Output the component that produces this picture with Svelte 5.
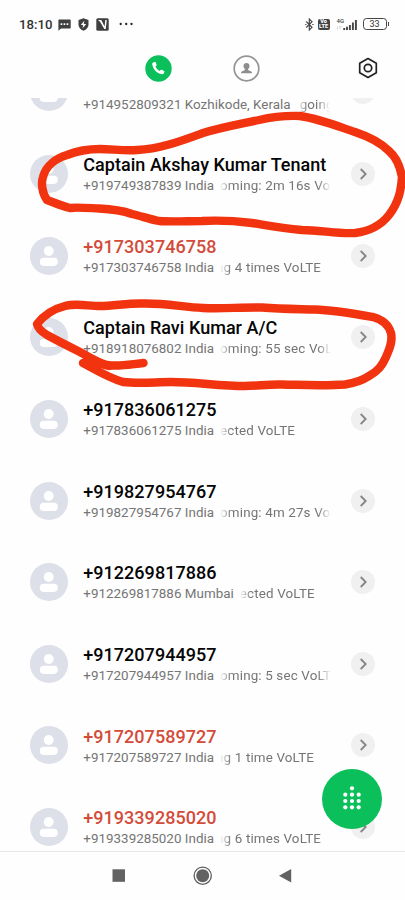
<script>
  const calls = [
    { title: '', number: '+914952809321', place: 'Kozhikode, Kerala', status: 'going', shift: 3, width: 33 },
    { title: 'Captain Akshay Kumar Tenant', number: '+919749387839', place: 'India', status: 'oming: 2m 16s Vo' },
    { title: '+917303746758', number: '+917303746758', place: 'India', status: 'ng 4 times VoLTE', shift: -4, missed: true },
    { title: 'Captain Ravi Kumar A/C', number: '+918918076802', place: 'India', status: 'oming: 55 sec VoL' },
    { title: '+917836061275', number: '+917836061275', place: 'India', status: 'ected VoLTE' },
    { title: '+919827954767', number: '+919827954767', place: 'India', status: 'oming: 4m 27s Vo' },
    { title: '+912269817886', number: '+912269817886', place: 'Mumbai', status: 'ected VoLTE', width: 90 },
    { title: '+917207944957', number: '+917207944957', place: 'India', status: 'oming: 5 sec VoLT' },
    { title: '+917207589727', number: '+917207589727', place: 'India', status: 'ng 1 time VoLTE', shift: -4, missed: true },
    { title: '+919339285020', number: '+919339285020', place: 'India', status: 'ng 6 times VoLTE', shift: -4, missed: true }
  ];
  const dots = [[0, -10.7], [-6.7, -4.3], [0, -4.3], [6.7, -4.3], [-6.7, 2], [0, 2], [6.7, 2], [-6.7, 8.3], [0, 8.3], [6.7, 8.3]];
</script>

<div class="phone">
  <div class="status-bar">
    <span class="time">18:10</span>
    <svg class="chat" width="13" height="12" viewBox="0 0 13 12">
      <path d="M1 .5h11q.7 0 .7.7v7.6q0 .7-.7.7H3L.4 11.7V1.2Q.4.5 1 .5z" fill="#3f3f3f" />
      <path d="M2.6 4.2h1.7v1.7H2.6zM5.6 4.2h1.7v1.7H5.6zM8.6 4.2h1.7v1.7H8.6z" fill="#fff" />
    </svg>
    <svg class="shield" width="11" height="13" viewBox="0 0 11 13">
      <path d="M5.5.3 10.5 2v4.5c0 3-2 5-5 6.2C2.5 11.5.5 9.5.5 6.5V2z" fill="#3f3f3f" />
      <path d="M6.3 2.8 2.8 7h2.300l-.5 3.200L8.200 5.900H5.800z" fill="#fff" />
    </svg>
    <svg class="app" width="13" height="13" viewBox="0 0 13 13">
      <rect x=".3" y=".3" width="12.4" height="12.4" rx="1.5" fill="#3f3f3f" />
      <path d="M2 2h3.300l3.300 6.400L9.300 2h1.500L9.700 11H8.300L4 3.800z" fill="#fff" />
    </svg>
    <svg class="more" width="15" height="4" viewBox="0 0 15 4" fill="#222">
      <circle cx="1.7" cy="2" r="1.15" /><circle cx="7.2" cy="2" r="1.15" /><circle cx="12.5" cy="2" r="1.15" />
    </svg>
    <span class="grow"></span>
    <svg class="bt" width="9" height="13" viewBox="0 0 9 13" fill="none" stroke="#444" stroke-width="1.15">
      <path d="M1.2 3.5 7 9.300 4.300 12V1L7 3.700 1.200 9.500" />
      <path d="M.2 6.500h1.300M7.300 6.500h1.300" />
    </svg>
    <div class="volte"><span>Vo</span><span>LTE</span></div>
    <div class="signal">
      <span class="net">4G</span>
      <svg width="21" height="13" viewBox="0 0 21 13">
        <path d="M.5 8.500v3M3 8.500v3M2.200 8.500h2.200" stroke="#bbb" stroke-width=".6" />
        <path d="M7.200 10v2M10 8.700V12M12.900 7V12M15.900 4.500V12M18.900 2V12" stroke="#444" stroke-width="1.9" />
      </svg>
    </div>
    <div class="battery"><span>33</span></div>
  </div>

  <div class="tabs">
    <svg class="calls-tab" width="27" height="27" viewBox="0 0 27 27">
      <circle cx="13.5" cy="13.5" r="13.2" fill="#0bbf5b" />
      <path d="M8.100 7.500 9.700 6.900q.7-.2 1 .5l.9 2.300q.3.700-.3 1.100l-.9.700q1.200 2.900 4.200 4.400l1-.9q.5-.5 1.100-.2l2.300 1.200q.7.300.4 1l-.7 1.500q-.5.900-1.700.8C11.400 18.300 8 14.300 7.200 9.300q-.2-1.300.9-1.800z" fill="#fff" />
    </svg>
    <svg class="contacts-tab" width="27" height="27" viewBox="0 0 27 27">
      <circle cx="13.5" cy="13.5" r="12.3" fill="#fff" stroke="#959595" stroke-width="1.7" />
      <path d="M13.500 8c1.900 0 3 1.200 3 2.900 0 1.400-.6 2.500-1.400 3.200v1c1 .7 3.300.9 3.800 2.200v.9H8.100v-.9c.5-1.300 2.800-1.500 3.800-2.200v-1c-.8-.7-1.400-1.800-1.400-3.200C10.500 9.200 11.600 8 13.500 8z" fill="#8e8e8e" />
    </svg>
    <svg class="settings" width="20" height="22" viewBox="0 0 20 22" fill="none" stroke="#222" stroke-width="1.7" stroke-linejoin="round">
      <path d="M10 1.500 18.300 6.200v9.600L10 20.500 1.700 15.800V6.200z" />
      <circle cx="10" cy="11" r="3.7" />
    </svg>
  </div>

  <div class="list">
    {#each calls as call}
      <div class="row">
        <svg class="avatar" width="38" height="38" viewBox="0 0 38 38">
          <circle cx="19" cy="19" r="19" fill="#dde0e8" />
          <circle cx="18.7" cy="14" r="4.9" fill="#fff" />
          <rect x="9.8" y="20.7" width="18" height="8.2" rx="3.8" fill="#fff" />
        </svg>
        <div class="info">
          <div class="title" class:missed={call.missed}>{call.title}</div>
          <div class="sub">
            <span class="origin">{call.number} {call.place}</span>
            <span class="status" style:text-indent="{call.shift ?? 0}px" style:width="{call.width ?? 111}px">{call.status}</span>
          </div>
        </div>
        <svg class="open" width="24" height="24" viewBox="0 0 24 24">
          <circle cx="12" cy="12" r="12" fill="#f0f0f0" />
          <path d="m9.700 7 5 5-5 5" fill="none" stroke="#858585" stroke-width="1.8" />
        </svg>
      </div>
    {/each}
  </div>

  <div class="nav">
    <svg width="200" height="22" viewBox="0 0 200 22">
      <rect x="9.5" y="4.3" width="12.5" height="12.5" fill="#626262" />
      <circle cx="99.7" cy="10.7" r="8.6" fill="none" stroke="#5c5c5c" stroke-width="1.3" />
      <circle cx="99.7" cy="10.7" r="6.5" fill="#626262" />
      <path d="M176 10.700 188.200 4v13.400z" fill="#626262" />
    </svg>
  </div>

  <svg class="marker" width="405" height="900" viewBox="0 0 405 900" fill="none" stroke="#f2330f" stroke-width="8.4" stroke-linecap="round" stroke-linejoin="round">
    <path d="M70 208C61 206 53 202 47 200C42 193 41 183 43 177C46 165 57 158 67 155C77 151 89 149 100 149C112 149 124 151 137 150C160 149 181 141 203 133C223 127 241 124 259 120C276 116 286 115.500 300 116C320 119 337 126 355 132C370 137 381 143 389 151C396 157 400 166 402 177C401 190 399 202 389 215C382 224 371 231 355 233C338 234 320 230 302 230C279 228 265 225 252 223C236 221 219 220 202 221C188 221 172 222 159 221C149 219 141 216 132 214C121 210 110 209 99 208.500C88 208 76 207 70 208" />
    <path d="M83 363C96 370 109 378 123 382C140 384 155 382 171 382C195 382 220 386 245 386C257 386 269 384 282 384.500C305 385 324 386 345 384.500C355 383 363 380 369 376C378 371 382 366 386 357C389 350 393 342 391 333C389 326 384 320 373 317C350 313 333 310 315 309.500C297 309 280 309 262 307.500C241 307 223 309 203 308C183 307 164 303 143 303.500C128 303 114 306 100 306C88 306 76 303 65 306C53 309 44 315 37 324C38 329 42 332 47 335C58 341 68 346 78 351C88 356 96 362 107 365C119 367 132 364 143.500 363" />
    <path d="M84 363C92 360 99 364 109 366" />
  </svg>

  <svg class="dial" width="60" height="60" viewBox="-30 -30 60 60">
    <circle r="30" fill="#0bbf5b" />
    {#each dots as [x, y]}
      <circle cx={x} cy={y} r="2.1" fill="#fff" />
    {/each}
  </svg>
</div>

<style>
  :global(body) { background: #fff; }
  .phone {
    position: relative;
    width: 405px;
    height: 900px;
    overflow: hidden;
    display: flex;
    flex-direction: column;
    background: #fefefe;
    font-family: Roboto, "Noto Sans", sans-serif;
  }
  svg { display: block; flex: none; }
  .status-bar {
    height: 48px;
    flex: none;
    box-sizing: border-box;
    padding: 0 17px 0 19px;
    display: flex;
    align-items: center;
  }
  .time { width: 39px; font-size: 13.2px; font-weight: 500; color: #333; }
  .chat { margin-top: 2px; }
  .shield { margin-left: 7px; }
  .app { margin-left: 7px; margin-right: 10px; }
  .grow { flex: 1; }
  .volte {
    width: 12px;
    height: 11px;
    margin: 0 7px 0 4px;
    background: #444;
    border-radius: 2px;
    color: #fff;
    font-size: 5.5px;
    line-height: 5px;
    font-weight: 900;
    display: flex;
    flex-direction: column;
    align-items: center;
    justify-content: center;
  }
  .signal { position: relative; width: 21px; margin-right: 5px; }
  .net { position: absolute; left: 0; top: -1px; font-size: 6px; line-height: 7px; font-weight: 500; color: #444; }
  .battery {
    position: relative;
    width: 24px;
    height: 12px;
    margin-right: 1.5px;
    box-sizing: border-box;
    border: 1.3px solid #444;
    border-radius: 3.5px;
    font-size: 9px;
    line-height: 10px;
    color: #333;
    text-align: center;
  }
  .battery::after { content: ""; position: absolute; right: -3px; top: 3px; width: 1px; height: 4px; background: #444; }
  .tabs {
    height: 50px;
    flex: none;
    box-sizing: border-box;
    padding: 0 27px 10px 145px;
    display: flex;
    align-items: center;
  }
  .contacts-tab { margin-left: 61px; }
  .settings { margin-left: auto; }
  .list { height: 753px; flex: none; overflow: hidden; }
  .row {
    height: 81.65px;
    box-sizing: border-box;
    padding: 0 30px;
    display: flex;
    align-items: center;
  }
  .row:first-child { margin-top: -46.5px; }
  .info { flex: 1; min-width: 0; margin-left: 15.3px; padding-top: 1.4px; }
  .title { height: 22px; line-height: 22px; font-size: 18px; font-weight: 500; letter-spacing: .03px; color: #050505; white-space: nowrap; }
  .title.missed { color: #d34b39; }
  .sub { display: flex; height: 19px; line-height: 19px; font-size: 13.4px; color: #757575; white-space: nowrap; }
  .origin { letter-spacing: .02px; }
  .row:first-child .sub { padding-top: .3px; }
  .status {
    margin-left: 6px;
    overflow: hidden;
    letter-spacing: .15px;
    mask-image: linear-gradient(to right, transparent, #000 11px, #000 calc(100% - 13px), transparent);
  }
  .open { margin-right: .5px; }
  .nav {
    height: 49px;
    flex: none;
    box-sizing: border-box;
    border-top: 1px solid #e8e8e8;
    padding: 13px 0 0 103px;
  }
  .marker { position: absolute; left: 0; top: 0; pointer-events: none; }
  .dial { position: absolute; left: 322.4px; top: 768.7px; }
</style>
